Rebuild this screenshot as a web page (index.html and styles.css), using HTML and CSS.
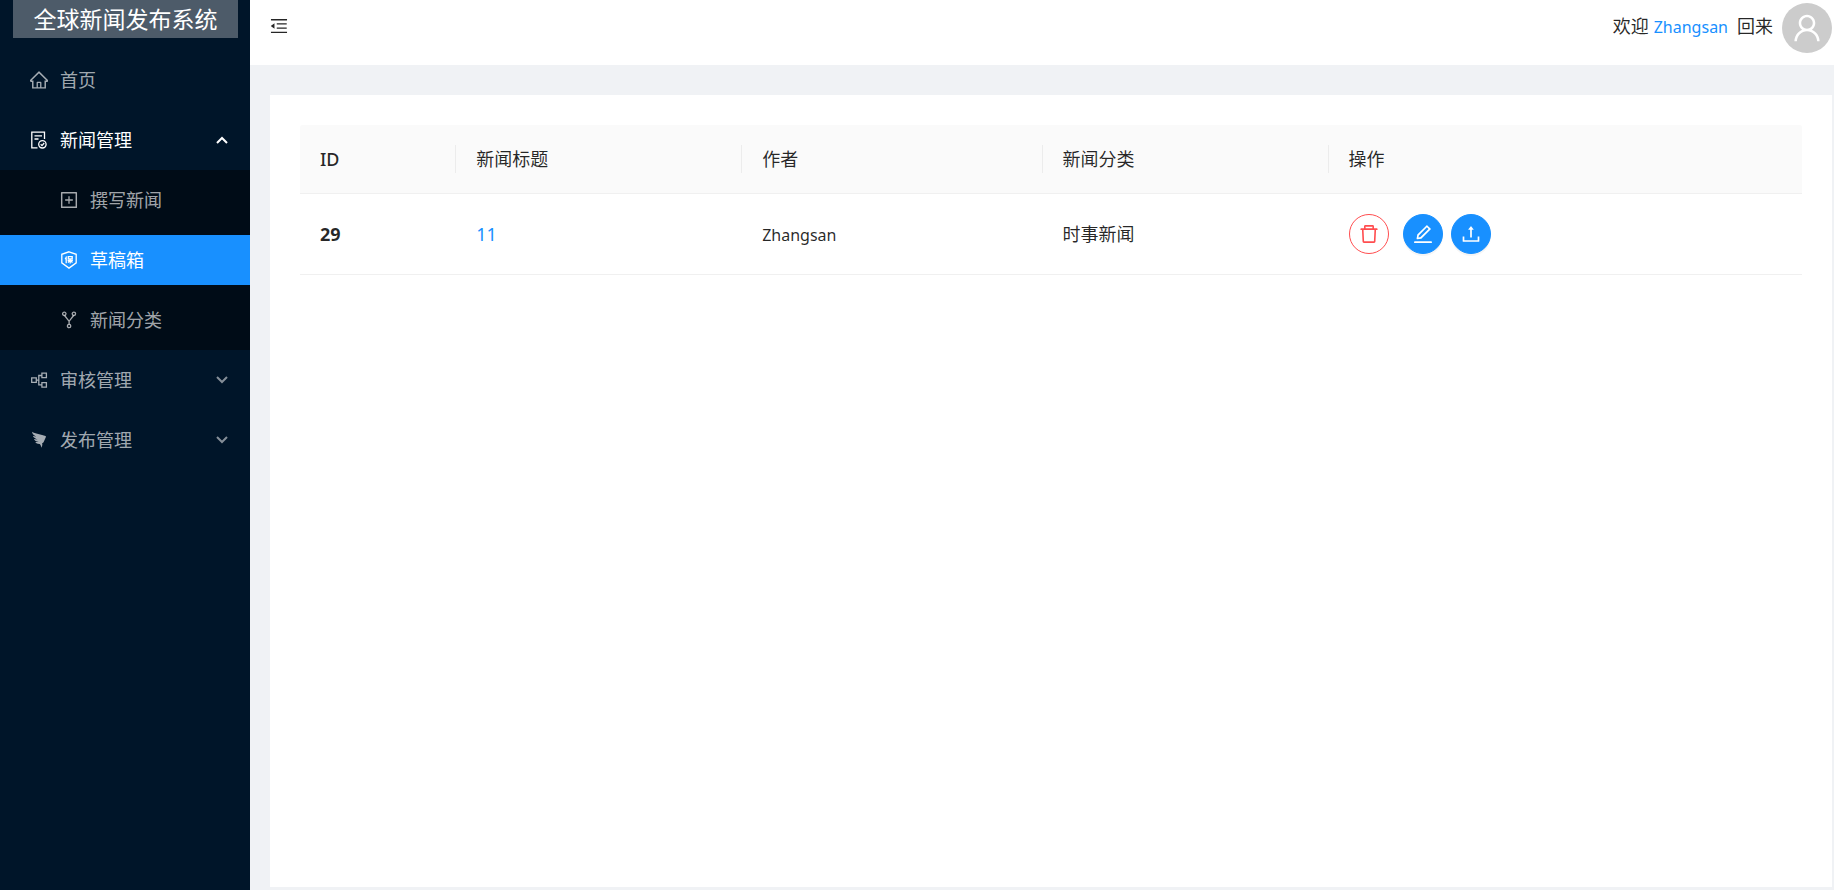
FILE: index.html
```html
<!DOCTYPE html>
<html lang="zh-CN">
<head>
<meta charset="utf-8">
<meta name="viewport" content="width=device-width, initial-scale=1">
<title>全球新闻发布系统</title>
<link rel="stylesheet" href="styles.css">
</head>
<body>
<div class="layout">
  <aside class="sider">
    <h1 class="logo">全球新闻发布系统</h1>
    <nav class="menu">
      <a class="item" href="#">
        <svg class="icon" viewBox="64 64 896 896" aria-hidden="true"><path d="M946.5 505L560.1 118.8l-25.9-25.9a31.5 31.5 0 00-44.4 0L77.5 505a63.9 63.9 0 00-18.8 46c.4 35.2 29.7 63.3 64.9 63.3h42.5V940h691.8V614.3h43.4c17.1 0 33.2-6.7 45.3-18.8a63.6 63.6 0 0018.7-45.3c0-17-6.7-33.1-18.8-45.2zM568 868H456V664h112v204zm217.9-325.7V868H632V640c0-22.1-17.9-40-40-40H432c-22.1 0-40 17.9-40 40v228H238.1V542.3h-96l370-369.7 23.1 23.1L882 542.3h-96.1z"/></svg>
        <span>首页</span>
      </a>
      <button class="item open" type="button" aria-expanded="true">
        <svg class="icon line" viewBox="0 0 18 18" aria-hidden="true"><path d="M7.500 16.800H1.800V1.200h12.700V8M4.500 4.800h7.500M4.500 8h4"/><circle cx="12.400" cy="13.300" r="3.700"/><path d="M10.700 13.300l1.300 1.300 2.200-2.600"/></svg>
        <span>新闻管理</span>
        <svg class="arrow" viewBox="0 0 12 8" aria-hidden="true"><path d="M1 7l5-5 5 5"/></svg>
      </button>
      <div class="submenu">
        <a class="item" href="#">
          <svg class="icon" viewBox="64 64 896 896" aria-hidden="true"><path d="M328 544h152v152c0 4.400 3.600 8 8 8h48c4.400 0 8-3.600 8-8V544h152c4.400 0 8-3.600 8-8v-48c0-4.400-3.600-8-8-8H544V328c0-4.400-3.600-8-8-8h-48c-4.400 0-8 3.600-8 8v152H328c-4.400 0-8 3.600-8 8v48c0 4.400 3.600 8 8 8z"/><path d="M880 112H144c-17.700 0-32 14.300-32 32v736c0 17.700 14.300 32 32 32h736c17.700 0 32-14.300 32-32V144c0-17.700-14.300-32-32-32zm-40 728H184V184h656v656z"/></svg>
          <span>撰写新闻</span>
        </a>
        <a class="item selected" href="#" aria-current="page">
          <svg class="icon line" viewBox="0 0 18 18" aria-hidden="true"><path d="M9 .8l7.200 2.500v8.500L9 17.100l-7.200-5.300V3.300z"/><path d="M6.600 5.500L5.200 8.200M6.200 7.300v5M8.300 5.700h3.900v2.100H8.300zM7.600 9.300h5.300M10.200 8v4.500M10 9.500l-2.100 2M10.400 9.500l2.100 2"/></svg>
          <span>草稿箱</span>
        </a>
        <a class="item" href="#">
          <svg class="icon line" viewBox="0 0 18 18" aria-hidden="true"><circle cx="4.300" cy="2.800" r="1.700"/><circle cx="13.900" cy="2.800" r="1.700"/><circle cx="9.100" cy="15" r="1.700"/><path d="M4.600 4.500l4.500 5.800 4.500-5.800M9.100 10.300v3"/></svg>
          <span>新闻分类</span>
        </a>
      </div>
      <button class="item" type="button" aria-expanded="false">
        <svg class="icon line" viewBox="0 0 18 18" aria-hidden="true"><path d="M1.700 6.800h4.600v4.600H1.700zM11.900 2.200h4.500v4.500h-4.500zM11.900 11.600h4.500v4.500h-4.500zM6.300 9.100h2.500M11.900 4.500H8.800v9.300h3.100"/></svg>
        <span>审核管理</span>
        <svg class="arrow" viewBox="0 0 12 8" aria-hidden="true"><path d="M1 1l5 5 5-5"/></svg>
      </button>
      <button class="item" type="button" aria-expanded="false">
        <svg class="icon" viewBox="0 0 18 18" aria-hidden="true"><path d="M2 .8c2.600 2 9.600 2.600 13.500 4.300.5.200.5.700.3 1.200l-1.900 4.300c-.5 1-1 1.400-1.800 1.900l.3 1.600-1.100 2.700-.7-2.900-.9-1c-2 .1-3.600-.5-4.500-1.900l3.500-.1C6.300 10.600 4.500 9.700 3.900 8.100l3.700.4C5 7.200 3.300 6.400 2.900 4.700l3.300 1C3.800 4.300 2.200 3 2 .8z"/></svg>
        <span>发布管理</span>
        <svg class="arrow" viewBox="0 0 12 8" aria-hidden="true"><path d="M1 1l5 5 5-5"/></svg>
      </button>
    </nav>
  </aside>
  <div class="main">
    <header class="header">
      <button class="trigger" type="button" aria-label="收起菜单">
        <svg class="icon" viewBox="64 64 896 896" aria-hidden="true"><path d="M408 442h480c4.400 0 8-3.600 8-8v-56c0-4.400-3.600-8-8-8H408c-4.400 0-8 3.600-8 8v56c0 4.400 3.600 8 8 8zm-8 204c0 4.400 3.600 8 8 8h480c4.400 0 8-3.600 8-8v-56c0-4.400-3.600-8-8-8H408c-4.400 0-8 3.600-8 8v56zm504-486H120c-4.400 0-8 3.600-8 8v56c0 4.400 3.600 8 8 8h784c4.400 0 8-3.600 8-8v-56c0-4.400-3.600-8-8-8zm0 632H120c-4.400 0-8 3.600-8 8v56c0 4.400 3.600 8 8 8h784c4.400 0 8-3.600 8-8v-56c0-4.400-3.600-8-8-8zM115.400 518.900L271.700 642c5.800 4.600 14.400.5 14.400-6.900V388.900c0-7.400-8.500-11.500-14.400-6.900L115.400 505.100a8.740 8.740 0 000 13.800z"/></svg>
      </button>
      <div class="account">
        <p class="welcome"><span>欢迎</span><span class="user name">Zhangsan</span><span>回来</span></p>
        <button class="avatar" type="button" aria-label="用户">
          <svg viewBox="64 64 896 896" aria-hidden="true"><path d="M858.500 763.600a374 374 0 00-80.600-119.500 375.630 375.630 0 00-119.500-80.600c-.4-.2-.8-.3-1.200-.5C719.500 518 760 444.700 760 362c0-137-111-248-248-248S264 225 264 362c0 82.700 40.500 156 102.800 201.100-.4.200-.8.300-1.200.5-44.800 18.900-85 46-119.500 80.600a375.630 375.630 0 00-80.600 119.500A371.700 371.700 0 00136 901.800a8 8 0 008 8.200h60c4.400 0 7.900-3.500 8-7.800 2-77.200 33-149.500 87.800-204.300 56.700-56.700 132-87.900 212.200-87.900s155.500 31.200 212.200 87.900C779 752.700 810 825 812 902.200c.1 4.400 3.600 7.800 8 7.800h60a8 8 0 008-8.200c-1-47.800-10.900-94.300-29.500-138.200zM512 534c-45.900 0-89.100-17.900-121.600-50.400S340 407.900 340 362c0-45.900 17.900-89.100 50.400-121.600S466.100 190 512 190s89.100 17.900 121.600 50.400S684 316.100 684 362c0 45.900-17.900 89.100-50.400 121.600S557.900 534 512 534z"/></svg>
        </button>
      </div>
    </header>
    <main class="content">
      <table class="table">
        <colgroup><col class="col-id"><col class="col-title"><col class="col-author"><col class="col-category"><col></colgroup>
        <thead>
          <tr><th scope="col" class="strong"><div class="head">ID</div></th><th scope="col"><div class="head">新闻标题</div></th><th scope="col"><div class="head">作者</div></th><th scope="col"><div class="head">新闻分类</div></th><th scope="col"><div class="head">操作</div></th></tr>
        </thead>
        <tbody>
          <tr>
            <td><b>29</b></td>
            <td><a href="#">11</a></td>
            <td><span class="name">Zhangsan</span></td>
            <td>时事新闻</td>
            <td>
              <div class="actions">
                <button class="round danger" type="button" aria-label="删除"><svg viewBox="64 64 896 896" aria-hidden="true"><path d="M360 184h-8c4.400 0 8-3.600 8-8v8h304v-8c0 4.400 3.600 8 8 8h-8v72h72v-80c0-35.300-28.700-64-64-64H352c-35.300 0-64 28.700-64 64v80h72v-72zm504 72H160c-17.700 0-32 14.300-32 32v32c0 4.400 3.600 8 8 8h60.400l24.700 523c1.600 34.100 29.800 61 63.900 61h454c34.200 0 62.300-26.800 63.900-61l24.700-523H888c4.400 0 8-3.600 8-8v-32c0-17.700-14.300-32-32-32zM731.300 840H292.700l-24.200-512h487l-24.200 512z"/></svg></button>
                <button class="round primary" type="button" aria-label="编辑"><svg viewBox="64 64 896 896" aria-hidden="true"><path d="M257.700 752c2 0 4-.2 6-.5L431.900 722c2-.4 3.900-1.300 5.300-2.800l423.900-423.900a9.960 9.960 0 000-14.100L694.900 114.900c-1.900-1.900-4.400-2.900-7.100-2.900s-5.200 1-7.100 2.900L256.800 538.800c-1.500 1.500-2.400 3.300-2.800 5.300l-29.500 168.200a33.500 33.500 0 009.400 29.800c6.600 6.400 14.900 9.900 23.800 9.900zm67.400-174.400L687.800 215l73.300 73.300-362.700 362.600-88.900 15.700 15.600-89zM880 836H144c-17.700 0-32 14.300-32 32v36c0 4.400 3.600 8 8 8h784c4.400 0 8-3.600 8-8v-36c0-17.700-14.300-32-32-32z"/></svg></button>
                <button class="round primary" type="button" aria-label="提交"><svg viewBox="64 64 896 896" aria-hidden="true"><path d="M400 317.700h73.900V656c0 4.400 3.600 8 8 8h60c4.400 0 8-3.600 8-8V317.700H624c6.700 0 10.400-7.700 6.300-12.900L518.300 163a8 8 0 00-12.600 0l-112 141.700c-4.100 5.300-.4 13 6.300 13zM878 626h-60c-4.400 0-8 3.600-8 8v154H214V634c0-4.400-3.600-8-8-8h-60c-4.400 0-8 3.600-8 8v198c0 17.700 14.300 32 32 32h684c17.700 0 32-14.300 32-32V634c0-4.400-3.600-8-8-8z"/></svg></button>
              </div>
            </td>
          </tr>
        </tbody>
      </table>
    </main>
  </div>
</div>
</body>
</html>
```
FILE: styles.css
```css
* {
  box-sizing: border-box;
}

body {
  margin: 0;
  font-family: "Noto Sans", "Noto Sans CJK SC", sans-serif;
  font-size: 18px;
  line-height: 28px;
  color: rgba(0, 0, 0, 0.85);
  background: #f0f2f5;
}

a {
  color: #1890ff;
  text-decoration: none;
}

button {
  padding: 0;
  border: 0;
  background: none;
  color: inherit;
  font: inherit;
  cursor: pointer;
}

svg {
  display: block;
  flex: none;
  fill: currentColor;
}

.name {
  font-size: 16px;
}

.layout {
  display: flex;
  min-height: 100vh;
}

/* Sidebar */
.sider {
  flex: none;
  width: 250px;
  background: #001529;
}

.logo {
  height: 38px;
  margin: 0 12px 12px 13px;
  background: rgba(255, 255, 255, 0.3);
  color: #fff;
  font-size: 23px;
  font-weight: 400;
  line-height: 38px;
  text-align: center;
}

.menu,
.submenu {
  display: flex;
  flex-direction: column;
  gap: 10px;
  padding: 5px 0;
}

.submenu {
  margin: -5px 0;
  background: #000c17;
}

.item {
  display: flex;
  align-items: center;
  gap: 12px;
  width: 100%;
  height: 50px;
  padding: 0 22px 0 30px;
  color: rgba(255, 255, 255, 0.65);
  text-align: left;
}

.submenu .item {
  padding-left: 60px;
}

.item.open {
  color: #fff;
}

.item.selected {
  background: #1890ff;
  color: #fff;
}

.icon {
  width: 18px;
  height: 18px;
}

.line,
.arrow {
  fill: none;
  stroke: currentColor;
  stroke-width: 1.3;
}

.arrow {
  width: 12px;
  height: 8px;
  margin-left: auto;
  stroke-width: 2;
}

.item:not(.open) .arrow {
  opacity: 0.8;
}

/* Header */
.main {
  display: flex;
  flex: 1;
  flex-direction: column;
  min-width: 0;
}

.header {
  display: flex;
  align-items: flex-start;
  justify-content: space-between;
  height: 65px;
  padding: 3px 2px 0 20px;
  background: #fff;
}

.trigger {
  padding: 14px 0;
}

.account {
  display: flex;
  align-items: flex-start;
  gap: 9px;
}

.welcome {
  display: flex;
  align-items: baseline;
  margin: 9px 0 0;
}

.user {
  padding: 0 9px 0 5px;
  color: #1890ff;
}

.avatar {
  display: grid;
  place-items: center;
  width: 50px;
  height: 50px;
  border-radius: 50%;
  background: #ccc;
  color: #fff;
}

.avatar svg {
  width: 30px;
  height: 30px;
}

/* Content */
.content {
  flex: 1;
  margin: 30px 2px 3px 20px;
  padding: 30px;
  background: #fff;
}

.table {
  width: 100%;
  border-collapse: separate;
  border-spacing: 0;
  table-layout: fixed;
  text-align: left;
}

.col-id {
  width: 10.4%;
}

.col-title,
.col-category {
  width: 19.04%;
}

.col-author {
  width: 20%;
}

.table th {
  padding: 20px 0;
  border-bottom: 1px solid #f0f0f0;
  background: #fafafa;
  font-weight: 400;
}

.table th.strong {
  font-weight: 500;
}

.table th:first-child {
  border-top-left-radius: 3px;
}

.table th:last-child {
  border-top-right-radius: 3px;
}

.head {
  padding: 0 20px;
  border-right: 1px solid #ececec;
}

th:last-child .head {
  border-right: 0;
}

.table td {
  padding: 20px;
  border-bottom: 1px solid #f0f0f0;
}

.actions {
  display: flex;
  gap: 8px;
}

.round {
  display: grid;
  place-items: center;
  width: 40px;
  height: 40px;
  border: 1px solid #1890ff;
  border-radius: 50%;
}

.round svg {
  width: 20px;
  height: 20px;
}

.primary {
  background: #1890ff;
  box-shadow: 0 2px 0 rgba(0, 0, 0, 0.04);
  color: #fff;
}

.danger {
  margin-right: 6px;
  border-color: #ff4d4f;
  background: #fff;
  color: #ff4d4f;
}
```
